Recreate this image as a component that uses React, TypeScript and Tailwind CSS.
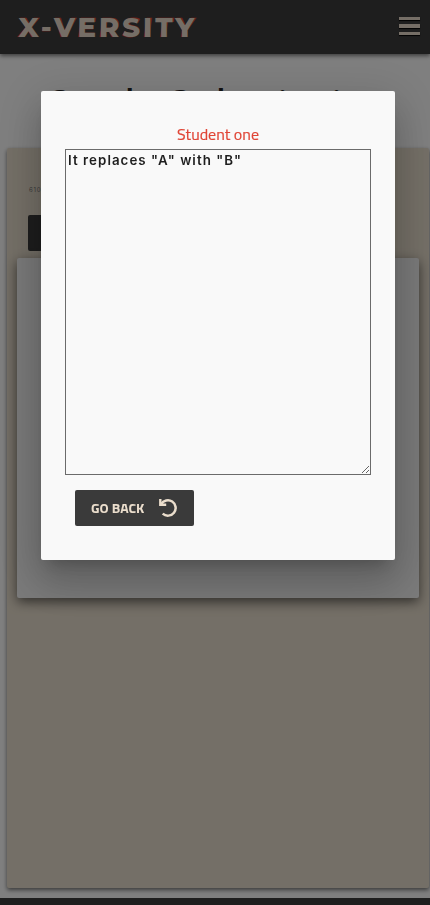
import React from 'react';

function Logo() {
  return (
    <div className="ml-[18px] font-['Montserrat','Inter',sans-serif] font-extrabold">
      <svg className="block overflow-visible" width="200" height="54" viewBox="0 0 200 54" aria-label="X-VERSITY">
        <text x="4.2" y="37" fontSize="27.5" transform="skewX(-8)" fill="#e0402f" textLength="176" lengthAdjust="spacing">X-VERSITY</text>
        <text x="0.4" y="37" fontSize="27.5" fill="#eaddcc" textLength="176" lengthAdjust="spacing">X-VERSITY</text>
      </svg>
    </div>
  );
}

function MenuButton() {
  return (
    <button aria-label="Menu" className="mr-[10px] mb-[2px] flex w-[21px] flex-col gap-1">
      <span className="h-[3.3px] bg-[#eaddcc] shadow-[0_1px_1px_#000]" />
      <span className="h-[3.3px] bg-[#eaddcc] shadow-[0_1px_1px_#000]" />
      <span className="h-[3.3px] bg-[#eaddcc] shadow-[0_1px_1px_#000]" />
    </button>
  );
}

function UndoIcon() {
  return (
    <svg width="20" height="20" viewBox="0 0 20 20" fill="none" stroke="#eaddcc">
      <path d="M3.2 6.2A7.7 7.7 0 1 1 4.7 15.6" strokeWidth="2.5" />
      <path d="M1.1 1H3.5V4.4L5.2 5.6H8.2V8H1.1Z" fill="#eaddcc" stroke="none" />
    </svg>
  );
}

function Page() {
  return (
    <div className="flex h-[905px] flex-col bg-white">
      <header className="z-10 flex h-[54px] shrink-0 items-center justify-between bg-[#3c3c3c] shadow-[0_2px_4px_rgba(0,0,0,0.5)]">
        <Logo />
        <MenuButton />
      </header>
      <h1 className="mt-[23px] h-[71px] whitespace-nowrap pl-[45px] font-['Roboto',sans-serif] text-[43px] leading-[56px] tracking-[-0.3px] text-[#222]">Grade Submission</h1>
      <main className="ml-[7px] mr-px h-[740px] rounded-[2px] bg-[#e9dfce] px-[10px] pt-[36px] shadow-[0_2px_4px_rgba(0,0,0,0.55)]">
        <p className="ml-[12px] h-[31px] font-['Inter',sans-serif] text-[6px] leading-[11px] tracking-[0.8px] text-[#777]">610</p>
        <button className="ml-[11px] block h-[36px] w-[120px] rounded-[2px] bg-[#3a3a3a]" aria-label="Open" />
        <section className="mt-[7px] h-[340px] w-[402px] rounded-[2px] bg-[#f4f4f4] shadow-[0_4px_12px_rgba(0,0,0,0.55)]" />
      </main>
      <footer className="mt-[10px] h-[7px] bg-[#3c3c3c]" />
    </div>
  );
}

function SubmissionDialog() {
  return (
    <div className="fixed inset-0 z-20 flex items-start justify-center bg-black/50 pt-[91px]">
      <div role="dialog" className="ml-[6px] h-[469px] w-[354px] rounded-[2px] bg-[#f9f9f9] px-6 pt-[33px] shadow-[0_11px_15px_-7px_rgba(0,0,0,0.2),0_24px_38px_3px_rgba(0,0,0,0.14),0_9px_46px_8px_rgba(0,0,0,0.12)]">
        <h2 className="h-[25px] text-center font-['Titillium_Web','Noto_Sans',sans-serif] text-[16px] leading-[20px] text-[#e04536] [-webkit-text-stroke:0.2px_#e04536]">Student one</h2>
        <textarea
          readOnly
          defaultValue={'It replaces "A" with "B"'}
          className="block h-[326px] w-[306px] resize border border-[#6b6b6b] bg-transparent p-[2px] font-['Inter',sans-serif] text-[13.333px] font-semibold leading-[16px] tracking-[1.04px] text-[#1e1e1e] outline-none"
        />
        <button className="ml-[10px] mt-[15px] flex h-[36px] w-[119px] items-center justify-between rounded-[2px] bg-[#3a3a3a] pl-4 pr-[16px] text-[#eaddcc]">
          <span className="mb-[2px] whitespace-nowrap font-['Titillium_Web','Noto_Sans',sans-serif] text-[14px] font-bold">GO BACK</span>
          <UndoIcon />
        </button>
      </div>
    </div>
  );
}

export default function App() {
  return (
    <div className="h-[905px] overflow-hidden">
      <Page />
      <SubmissionDialog />
    </div>
  );
}
